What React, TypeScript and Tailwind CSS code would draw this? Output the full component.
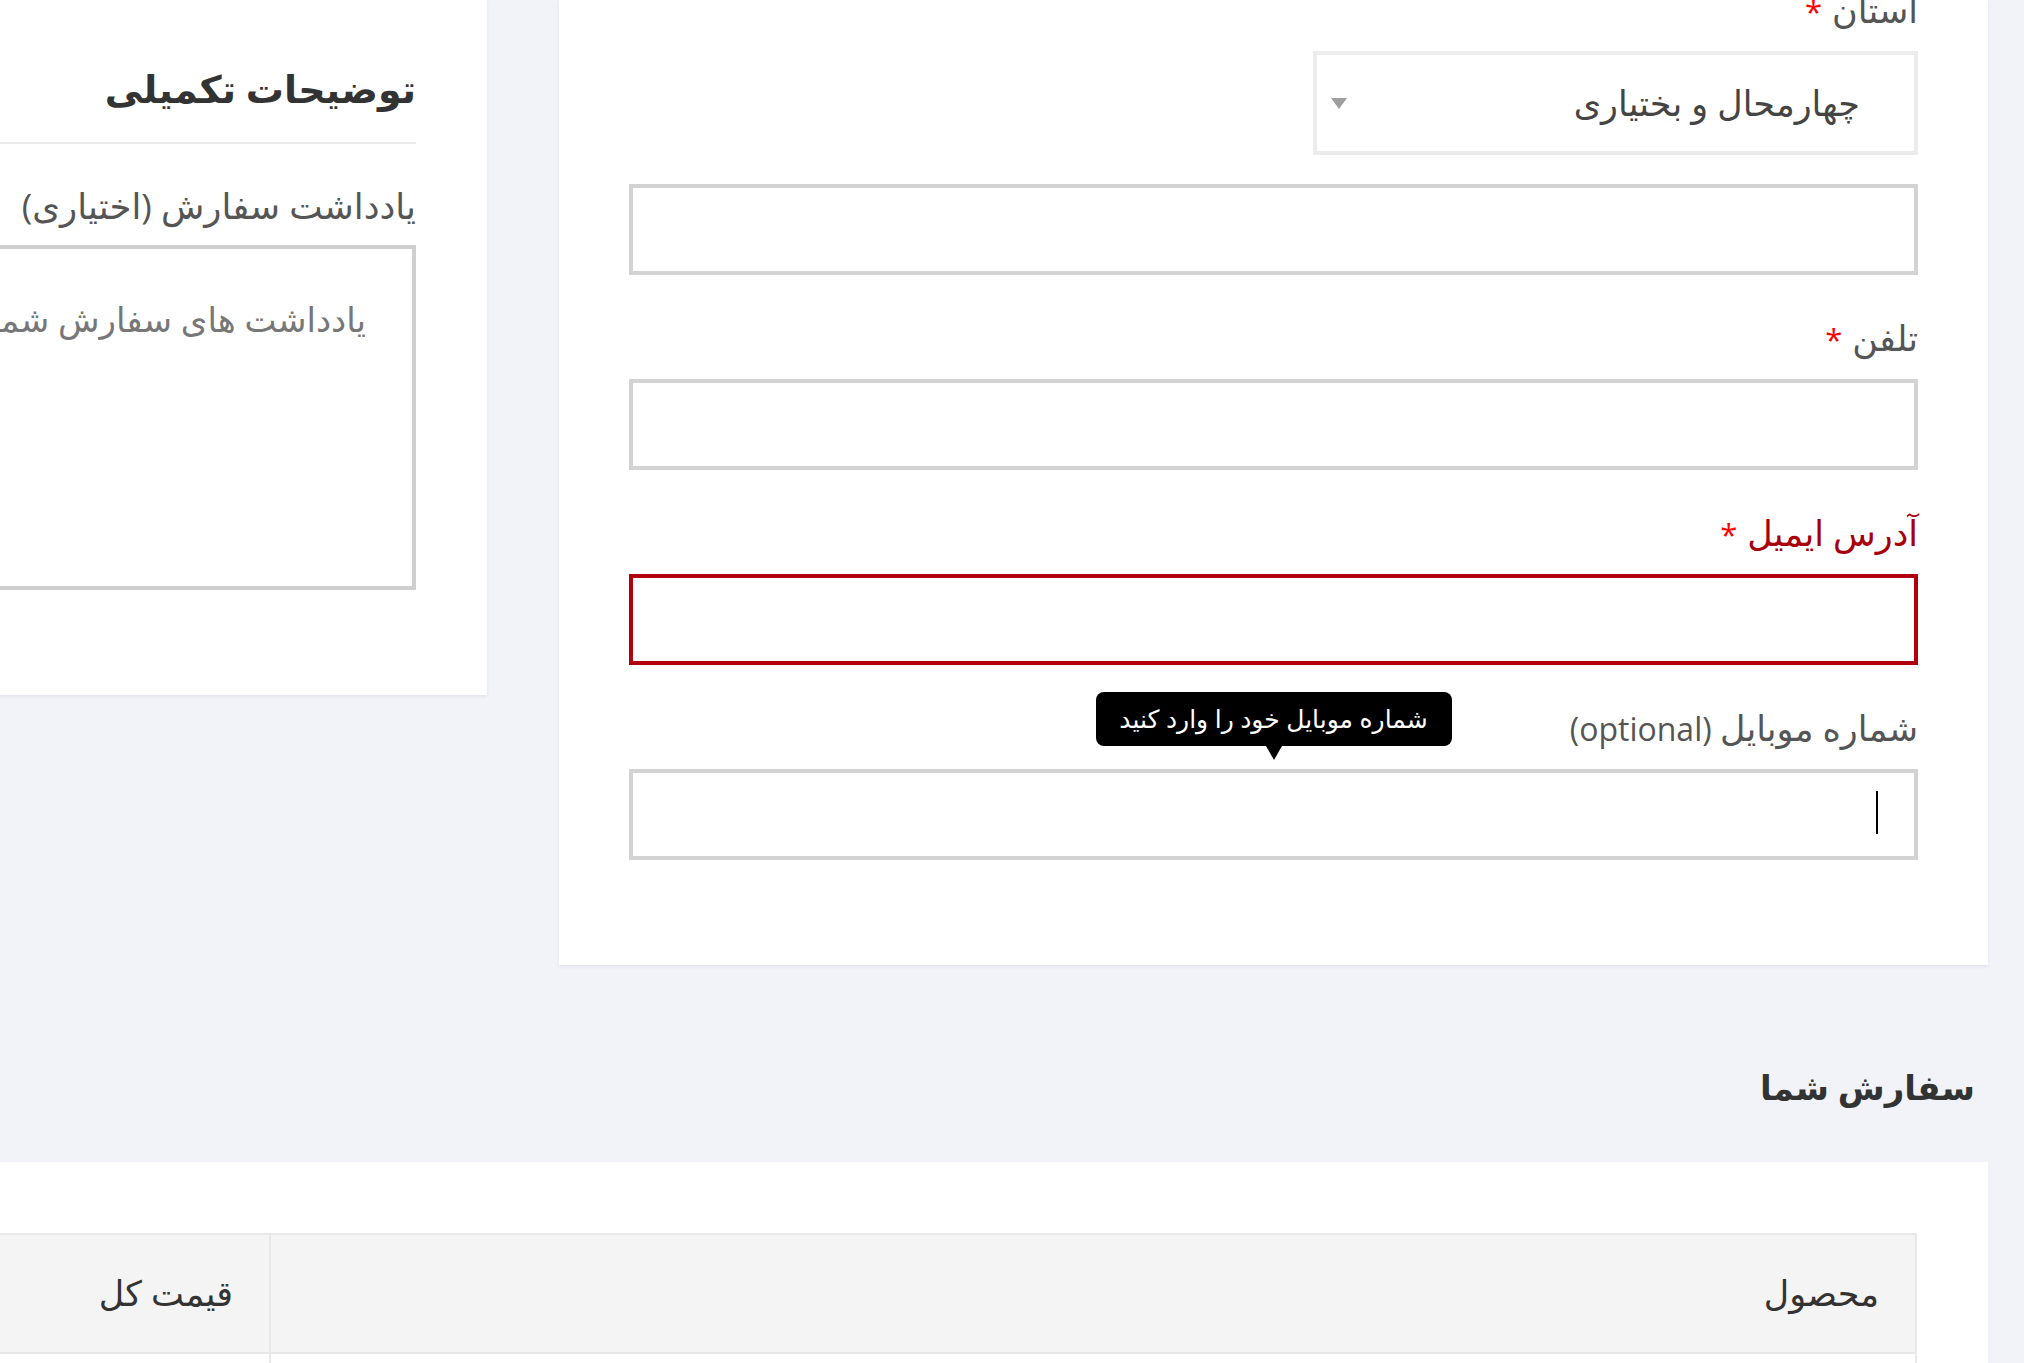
import React from 'react'

const font = "font-['Open_Sans','DejaVu_Sans',sans-serif]"

function Label({ text, required, danger, note }: { text: string; required?: boolean; danger?: boolean; note?: string }) {
  return (
    <div className={`h-[38px] leading-[38px] text-[35px] mb-[22px] whitespace-nowrap ${danger ? 'text-[#a8000b]' : 'text-[#555]'}`}>
      {text}
      {note && <span className="text-[32px]"> {note}</span>}
      {required && <span className="text-[#ff0000] mr-[10px] text-[31px]">*</span>}
    </div>
  )
}

function Field({ label, required, danger }: { label: string; required?: boolean; danger?: boolean }) {
  return (
    <div className="mt-[44px]">
      <Label text={label} required={required} danger={danger} />
      <div className={`h-[91px] border-4 bg-white ${danger ? 'border-[#b0000d]' : 'border-[#d3d3d3]'}`} />
    </div>
  )
}

export default function App() {
  return (
    <div dir="rtl" className={`w-[2024px] h-[1363px] overflow-hidden bg-[#f2f3f8] ${font}`}>
      <div className="flex items-start gap-[72px] pr-[36px]">
        {/* billing fields */}
        <div className="w-[1429px] shrink-0 bg-white px-[70px] pb-[105px] shadow-[0_2px_3px_rgba(60,70,140,0.08)]">
          <div className="-mt-[9px]">
            <Label text="استان" required />
          </div>
          <div className="w-[605px] h-[104px] mt-[6px] border-4 border-[#ececec] flex items-center justify-between pr-[54px] pl-[14px]">
            <span className="text-[35px] text-[#444]">چهارمحال و بختیاری</span>
            <span className="w-0 h-0 border-l-[8px] border-r-[8px] border-t-[11px] border-l-transparent border-r-transparent border-t-[#9e9e9e]" />
          </div>
          <div className="h-[91px] mt-[29px] border-4 border-[#d3d3d3]" />
          <Field label="تلفن" required />
          <Field label="آدرس ایمیل" required danger />
          <div className="mt-[44px] relative">
            <Label text="شماره موبایل" note="(optional)" />
            <div className="h-[91px] border-4 border-[#d3d3d3] relative">
              <span className="absolute right-[36px] top-[18px] w-[2px] h-[43px] bg-black" />
            </div>
            <div className="absolute -top-[17px] left-1/2 -translate-x-1/2 flex flex-col items-center">
              <div className="w-[356px] h-[54px] rounded-[8px] bg-black text-white text-[25px] flex items-center justify-center whitespace-nowrap">
                شماره موبایل خود را وارد کنید
              </div>
              <span className="w-0 h-0 border-l-[8px] border-r-[8px] border-t-[14px] border-l-transparent border-r-transparent border-t-black" />
            </div>
          </div>
        </div>

        {/* additional info */}
        <div className="flex-1 min-w-0 h-[695px] overflow-hidden bg-white pr-[71px] shadow-[0_2px_3px_rgba(60,70,140,0.08)]">
          <div className="w-[800px] shrink-0">
            <h3 className="pt-[66px] h-[144px] text-[38px] leading-[44px] font-bold text-[#333] border-b-2 border-[#ececec] whitespace-nowrap">
              توضیحات تکمیلی
            </h3>
            <div className="mt-[42px] h-[38px] leading-[38px] text-[35.5px] text-[#555] mb-[21px] whitespace-nowrap">
              یادداشت سفارش (اختیاری)
            </div>
            <div className="h-[345px] border-4 border-[#cfcfcf] pr-[46px] pt-[50px] text-[34px] leading-[40px] text-[#777] whitespace-nowrap">
              یادداشت های سفارش شما، برای مثال نکات ویژه برای تحویل
            </div>
          </div>
        </div>
      </div>

      {/* order review */}
      <h3 className="mt-[102px] pr-[49px] h-[40px] leading-[40px] text-[34px] font-bold text-[#333]">سفارش شما</h3>
      <div className="mt-[55px] mr-[36px] bg-white pr-[71px] pt-[71px] h-[300px]">
        <div className="border-2 border-[#e8e8e8] border-l-0">
          <div className="flex h-[117px] bg-[#f4f4f4] text-[35px] text-[#333]">
            <div className="flex-1 flex items-center pr-[36px]">محصول</div>
            <div className="w-[271px] flex items-center pr-[36px] border-r-2 border-[#e8e8e8]">قیمت کل</div>
          </div>
          <div className="flex h-[100px] border-t-2 border-[#e8e8e8]">
            <div className="flex-1" />
            <div className="w-[271px] border-r-2 border-[#e8e8e8]" />
          </div>
        </div>
      </div>
    </div>
  )
}
